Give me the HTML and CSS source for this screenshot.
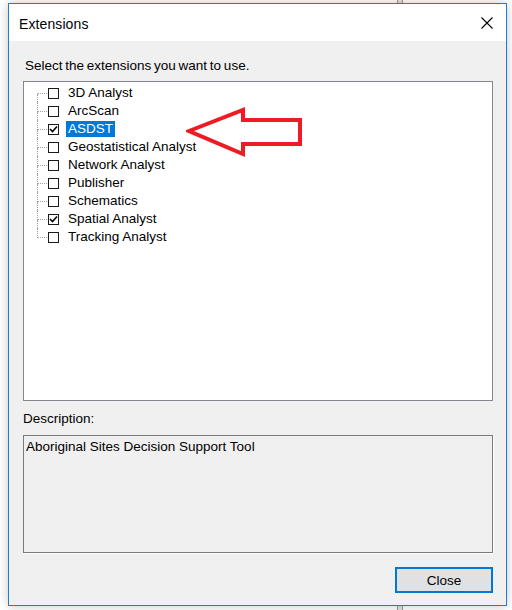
FILE: index.html
```html
<!DOCTYPE html>
<html>
<head>
<meta charset="utf-8">
<link rel="stylesheet" href="styles.css">
</head>
<body>
<div class="desktop">
  <div class="window">
    <div class="titlebar">
      <span class="title">Extensions</span>
      <svg class="close-x" width="12" height="12" viewBox="0 0 12 12"><path d="M0.5 0.5 L11.5 11.5 M11.5 0.5 L0.5 11.5" stroke="#000" stroke-width="1.1" fill="none"/></svg>
    </div>
    <div class="content">
      <div class="prompt">Select the extensions you want to use.</div>
      <div class="treebox">
        <ul class="tree">
          <li class="row first"><span class="elbow"><span class="up"></span><span class="down"></span></span><span class="cb"></span><span class="lbl">3D Analyst</span></li>
          <li class="row"><span class="elbow"><span class="up"></span><span class="down"></span></span><span class="cb"></span><span class="lbl">ArcScan</span></li>
          <li class="row"><span class="elbow"><span class="up"></span><span class="down"></span></span><span class="cb checked"><svg width="9" height="9" viewBox="0 0 9 9"><path d="M1 4 L3.5 6.5 L8 1.5" stroke="#000" stroke-width="1.6" fill="none"/></svg></span><span class="lbl sel">ASDST</span></li>
          <li class="row"><span class="elbow"><span class="up"></span><span class="down"></span></span><span class="cb"></span><span class="lbl">Geostatistical Analyst</span></li>
          <li class="row"><span class="elbow"><span class="up"></span><span class="down"></span></span><span class="cb"></span><span class="lbl">Network Analyst</span></li>
          <li class="row"><span class="elbow"><span class="up"></span><span class="down"></span></span><span class="cb"></span><span class="lbl">Publisher</span></li>
          <li class="row"><span class="elbow"><span class="up"></span><span class="down"></span></span><span class="cb"></span><span class="lbl">Schematics</span></li>
          <li class="row"><span class="elbow"><span class="up"></span><span class="down"></span></span><span class="cb checked"><svg width="9" height="9" viewBox="0 0 9 9"><path d="M1 4 L3.5 6.5 L8 1.5" stroke="#000" stroke-width="1.6" fill="none"/></svg></span><span class="lbl">Spatial Analyst</span></li>
          <li class="row last"><span class="elbow"><span class="up"></span><span class="down"></span></span><span class="cb"></span><span class="lbl">Tracking Analyst</span></li>
        </ul>
      </div>
      <div class="desc-label">Description:</div>
      <div class="descbox">Aboriginal Sites Decision Support Tool</div>
      <div class="actions">
        <button class="btn">Close</button>
      </div>
    </div>
    <svg class="arrow" width="130" height="60" viewBox="0 0 130 60">
      <polygon points="3,24 57,3 57,13 114,13 114,37 57,37 57,47" fill="none" stroke="#ed1c24" stroke-width="4" stroke-linejoin="miter"/>
    </svg>
  </div>
</div>
</body>
</html>
```
FILE: styles.css
```css
html, body {
  margin: 0;
  padding: 0;
}
body {
  width: 512px;
  height: 610px;
  overflow: hidden;
  background:
    linear-gradient(to right, transparent 397px, #9a9a9a 397px, #9a9a9a 398px, #e4e4e4 398px, #e4e4e4 402px, #9a9a9a 402px, #9a9a9a 403px, transparent 403px),
    #ffffff;
  font-family: "Liberation Sans", Arial, sans-serif;
  color: #000;
}
.desktop {
  padding: 3px 0 0 8px;
}
.window {
  position: relative;
  width: 497px;
  height: 601px;
  border: 1px solid #1a7fd4;
  background: #f0f0f0;
  box-shadow: 0 0 10px rgba(0, 0, 0, 0.22);
  display: flex;
  flex-direction: column;
}
.titlebar {
  height: 37px;
  background: #fff;
  display: flex;
  align-items: center;
  justify-content: space-between;
  padding: 0 13px 0 10px;
  flex: none;
}
.title {
  font-size: 14px;
  letter-spacing: 0.1px;
  margin-top: 2px;
}
.close-x {
  display: block;
  margin-top: 1px;
}
.content {
  flex: 1;
  display: flex;
  flex-direction: column;
  padding: 17px 13px 0 14px;
  font-size: 13.5px;
  line-height: 16px;
}
.prompt {
  padding-left: 2px;
  height: 16px;
  word-spacing: -1px;
}
.treebox {
  margin-top: 7px;
  height: 318px;
  border: 1px solid #828790;
  background: #fff;
}
.tree {
  list-style: none;
  margin: 0;
  padding: 2px 0 0 13px;
}
.row {
  height: 18px;
  display: flex;
  align-items: center;
}
.elbow {
  width: 10px;
  height: 18px;
  display: flex;
  flex-direction: column;
  flex: none;
}
.elbow .up {
  height: 10px;
  box-sizing: border-box;
  border-left: 1px dotted #a0a0a0;
  border-bottom: 1px dotted #a0a0a0;
}
.elbow .down {
  height: 8px;
  box-sizing: border-box;
  border-left: 1px dotted #a0a0a0;
}
.first .elbow .up {
  border-left-color: transparent;
}
.last .elbow .down {
  border-left-color: transparent;
}
.cb {
  width: 11px;
  height: 11px;
  box-sizing: border-box;
  border: 1px solid #1a1a1a;
  background: #fff;
  margin-left: 1px;
  display: flex;
  align-items: center;
  justify-content: center;
  flex: none;
}
.cb svg {
  display: block;
}
.lbl {
  margin-left: 7px;
  padding: 0 2px;
  height: 16px;
  line-height: 16px;
  white-space: nowrap;
}
.lbl.sel {
  background: #0078d7;
  color: #fff;
}
.desc-label {
  margin-top: 10px;
  height: 16px;
}
.descbox {
  margin-top: 8px;
  height: 111px;
  border: 1px solid #7a7a7a;
  box-shadow: 1px 1px 0 #ffffff;
  padding: 3px 2px 2px 2px;
  background: #f0f0f0;
}
.actions {
  display: flex;
  justify-content: flex-end;
  margin-top: 14px;
}
.btn {
  width: 98px;
  height: 26px;
  margin-right: 0;
  border: 2px solid #0078d7;
  background: #e1e1e1;
  font-family: "Liberation Sans", Arial, sans-serif;
  font-size: 13.5px;
  color: #000;
  padding: 1px 0 0 0;
}
.arrow {
  position: absolute;
  left: 177px;
  top: 103px;
}
```
